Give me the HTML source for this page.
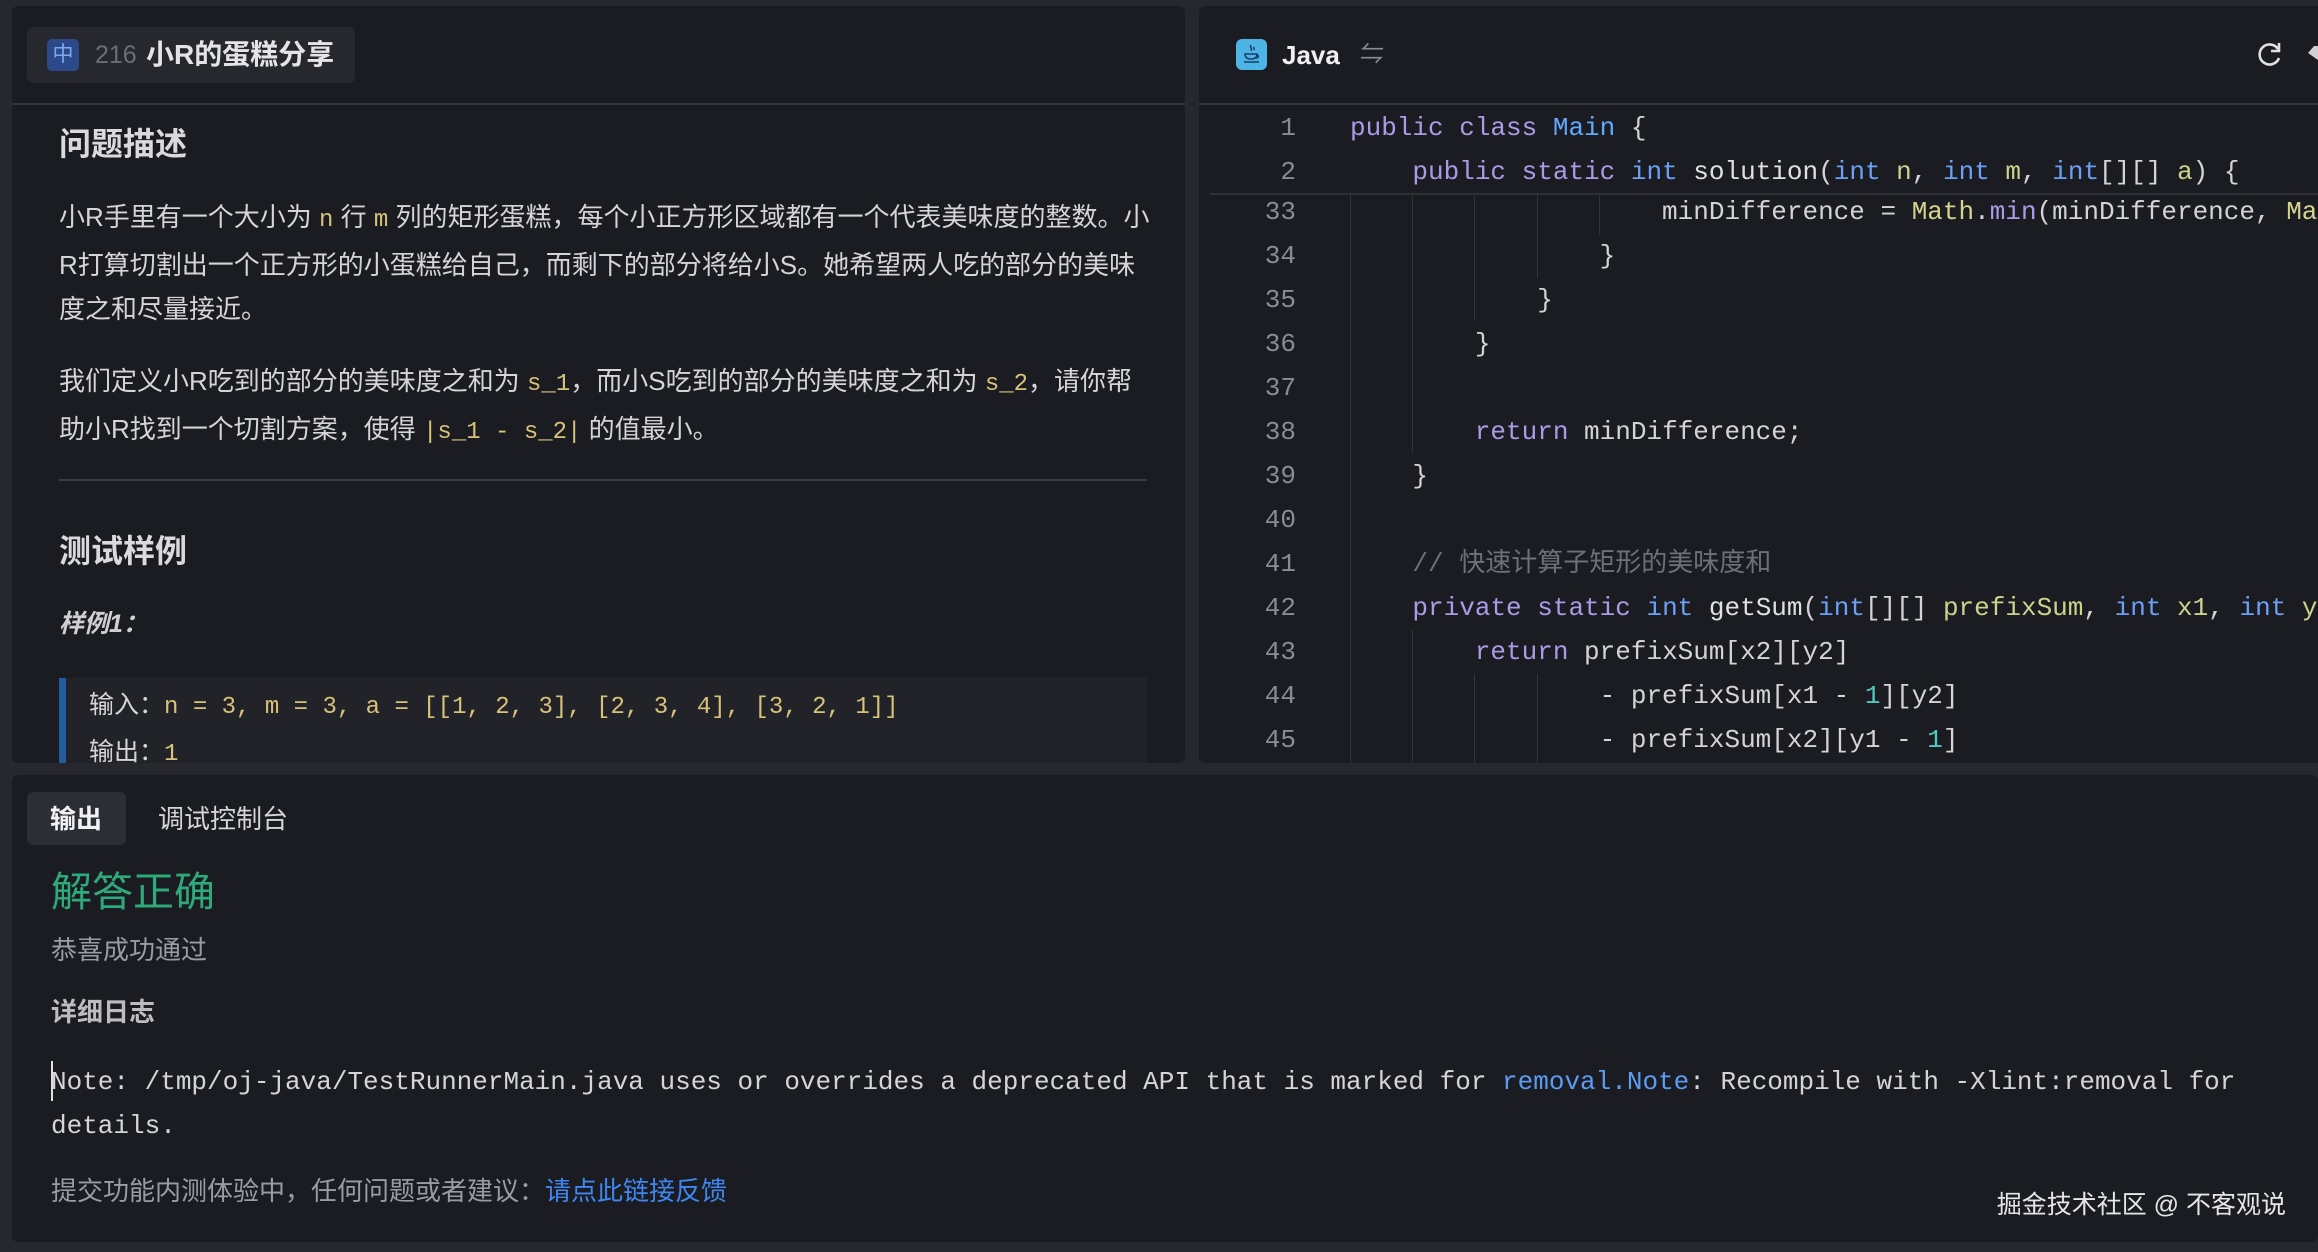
<!DOCTYPE html>
<html><head><meta charset="utf-8">
<style>
*{margin:0;padding:0;box-sizing:border-box}
body{width:2318px;height:1252px;background:#27282d;position:relative;overflow:hidden;font-family:"Liberation Sans","Noto Sans CJK SC",sans-serif;color:#d9d9dc}
.p{position:absolute;background:#1b1c21}
.abs{position:absolute;white-space:pre}
.mono{font-family:"Liberation Mono","Noto Sans CJK SC",monospace}
.y{color:#d8c27a}
.sm{font-size:24px}
.cl{position:absolute;left:0;height:44px;line-height:44px;font-size:26px;white-space:pre;font-family:"Liberation Mono","Noto Sans CJK SC",monospace;color:#d4d4d6}
.ln{position:absolute;width:100px;text-align:right;color:#8a8c92}
.cd{position:absolute;left:1350px}
.k{color:#a99be6}.t{color:#6ba0f4}.m{color:#e0e0e2}.f{color:#d6d58e}.pa{color:#cdd38c}.n{color:#4ec9c0}.c{color:#6d7078}.cls{color:#62a8ff}
.g{position:absolute;width:1px;background:#33353b}
</style></head><body>
<div class="p" style="left:12px;top:6px;width:1173px;height:757px;border-radius:6px"></div>
<div style="position:absolute;left:12px;top:103px;width:1173px;height:2px;background:#34363c"></div>
<div style="position:absolute;left:27px;top:27px;width:328px;height:56px;background:#26282e;border-radius:6px"></div>
<div style="position:absolute;left:47px;top:39px;width:32px;height:32px;background:#2c4a8a;border-radius:5px;color:#7fa9f0;font-size:21px;line-height:32px;text-align:center">中</div>
<div class="abs" style="left:95px;top:38px;font-size:25px;color:#6c6e74;line-height:34px">216</div>
<div class="abs" style="left:146px;top:37px;font-size:28px;font-weight:bold;color:#e4e4e6;line-height:36px">小R的蛋糕分享</div>

<div class="abs" style="left:59px;top:124px;font-size:32px;font-weight:bold;line-height:40px;color:#dadadc">问题描述</div>
<div class="abs" style="left:59px;top:195px;font-size:26px;line-height:44px;color:#d5d5d8">小R手里有一个大小为 <span class="y mono sm">n</span> 行 <span class="y mono sm">m</span> 列的矩形蛋糕，每个小正方形区域都有一个代表美味度的整数。小
R打算切割出一个正方形的小蛋糕给自己，而剩下的部分将给小S。她希望两人吃的部分的美味
度之和尽量接近。</div>
<div class="abs" style="left:59px;top:359px;font-size:26px;line-height:44px;color:#d5d5d8">我们定义小R吃到的部分的美味度之和为 <span class="y mono sm">s_1</span>，而小S吃到的部分的美味度之和为 <span class="y mono sm">s_2</span>，请你帮
助小R找到一个切割方案，使得 <span class="y mono sm">|s_1 - s_2|</span> 的值最小。</div>
<div style="position:absolute;left:59px;top:479px;width:1088px;height:2px;background:#3b3d43"></div>
<div class="abs" style="left:59px;top:531px;font-size:32px;font-weight:bold;line-height:40px;color:#dadadc">测试样例</div>
<div class="abs" style="left:59px;top:608px;font-size:25px;font-weight:bold;font-style:italic;line-height:32px;color:#cfcfd2">样例1：</div>
<div style="position:absolute;left:59px;top:678px;width:1088px;height:85px;background:#222328;border-left:7px solid #1f5d9c"></div>
<div class="abs" style="left:89px;top:683px;font-size:25px;line-height:44px;color:#d5d5d8">输入：<span class="y mono sm">n = 3, m = 3, a = [[1, 2, 3], [2, 3, 4], [3, 2, 1]]</span>
输出：<span class="y mono sm">1</span></div>

<div class="p" style="left:1199px;top:6px;width:1125px;height:757px;border-radius:6px;overflow:hidden"></div>
<div style="position:absolute;left:1199px;top:103px;width:1119px;height:2px;background:#34363c"></div>
<div style="position:absolute;left:1236px;top:39px;width:31px;height:31px;background:#4db4e6;border-radius:6px"></div>
<svg style="position:absolute;left:1236px;top:39px" width="31" height="31" viewBox="0 0 31 31"><g fill="none" stroke="#1a3d66" stroke-width="1.5"><path d="M15 6c-2 2 2 3 0 6M18 8c-1 1 1 2 0 3"/><path d="M9 15h12c0 4-3 5-6 5s-6-1-6-5zM21 16c2 0 2 3-1 3M8 23h15"/></g></svg>
<div class="abs" style="left:1282px;top:38px;font-size:26px;font-weight:bold;color:#f0f0f2;line-height:34px">Java</div>
<div class="abs" style="left:1360px;top:38px;font-size:24px;color:#8a8c92;line-height:34px">⇋</div>
<svg style="position:absolute;left:2256px;top:40px" width="28" height="28" viewBox="0 0 28 28"><path d="M22 9A10 10 0 1 0 23 18" fill="none" stroke="#e0e0e2" stroke-width="2.6"/><path d="M23 3v8h-8" fill="none" stroke="#e0e0e2" stroke-width="2.6"/></svg>
<div style="position:absolute;left:2308px;top:46px;width:10px;height:14px;background:#d0d0d2;clip-path:polygon(60% 0,100% 0,100% 100%,0 50%)"></div>
<div style="position:absolute;left:1210px;top:193px;width:1108px;height:2px;background:#2e3035"></div>

<div class="g" style="left:1350px;top:195px;height:568px"></div>
<div class="g" style="left:1412px;top:195px;height:258px"></div>
<div class="g" style="left:1412px;top:630px;height:133px"></div>
<div class="g" style="left:1474px;top:195px;height:126px"></div>
<div class="g" style="left:1474px;top:674px;height:89px"></div>
<div class="g" style="left:1537px;top:195px;height:83px"></div>
<div class="g" style="left:1537px;top:674px;height:89px"></div>
<div class="g" style="left:1599px;top:195px;height:40px"></div>

<div class="cl" style="top:106px"><span class="ln" style="left:1196px">1</span><span class="cd"><span class="k">public class</span> <span class="cls">Main</span> {</span></div>
<div class="cl" style="top:150px"><span class="ln" style="left:1196px">2</span><span class="cd">    <span class="k">public static</span> <span class="t">int</span> <span class="m">solution</span>(<span class="t">int</span> <span class="pa">n</span>, <span class="t">int</span> <span class="pa">m</span>, <span class="t">int</span>[][] <span class="pa">a</span>) {</span></div>
<div class="cl" style="top:190px"><span class="ln" style="left:1196px">33</span><span class="cd">                    minDifference = <span class="f">Math</span>.<span class="k">min</span>(minDifference, <span class="f">Math</span></span></div>
<div class="cl" style="top:234px"><span class="ln" style="left:1196px">34</span><span class="cd">                }</span></div>
<div class="cl" style="top:278px"><span class="ln" style="left:1196px">35</span><span class="cd">            }</span></div>
<div class="cl" style="top:322px"><span class="ln" style="left:1196px">36</span><span class="cd">        }</span></div>
<div class="cl" style="top:366px"><span class="ln" style="left:1196px">37</span></div>
<div class="cl" style="top:410px"><span class="ln" style="left:1196px">38</span><span class="cd">        <span class="k">return</span> minDifference;</span></div>
<div class="cl" style="top:454px"><span class="ln" style="left:1196px">39</span><span class="cd">    }</span></div>
<div class="cl" style="top:498px"><span class="ln" style="left:1196px">40</span></div>
<div class="cl" style="top:542px"><span class="ln" style="left:1196px">41</span><span class="cd c">    // 快速计算子矩形的美味度和</span></div>
<div class="cl" style="top:586px"><span class="ln" style="left:1196px">42</span><span class="cd">    <span class="k">private static</span> <span class="t">int</span> <span class="m">getSum</span>(<span class="t">int</span>[][] <span class="pa">prefixSum</span>, <span class="t">int</span> <span class="pa">x1</span>, <span class="t">int</span> <span class="pa">y1</span></span></div>
<div class="cl" style="top:630px"><span class="ln" style="left:1196px">43</span><span class="cd">        <span class="k">return</span> prefixSum[x2][y2]</span></div>
<div class="cl" style="top:674px"><span class="ln" style="left:1196px">44</span><span class="cd">                - prefixSum[x1 - <span class="n">1</span>][y2]</span></div>
<div class="cl" style="top:718px"><span class="ln" style="left:1196px">45</span><span class="cd">                - prefixSum[x2][y1 - <span class="n">1</span>]</span></div>
<div style="position:absolute;left:1199px;top:763px;width:1119px;height:12px;background:#27282d"></div>

<div class="p" style="left:12px;top:775px;width:2306px;height:467px;border-radius:6px"></div>
<div style="position:absolute;left:27px;top:792px;width:99px;height:53px;background:#2c2e35;border-radius:6px"></div>
<div class="abs" style="left:50px;top:803px;font-size:26px;font-weight:bold;color:#f2f2f4;line-height:32px">输出</div>
<div class="abs" style="left:158px;top:803px;font-size:26px;color:#d5d5d8;line-height:32px">调试控制台</div>
<div class="abs" style="left:51px;top:869px;font-size:41px;color:#2fa87a;line-height:46px">解答正确</div>
<div class="abs" style="left:51px;top:934px;font-size:26px;color:#9a9ca2;line-height:32px">恭喜成功通过</div>
<div class="abs" style="left:51px;top:996px;font-size:26px;font-weight:bold;color:#bdbdc0;line-height:32px">详细日志</div>
<div style="position:absolute;left:51px;top:1061px;width:2px;height:40px;background:#e0e0e0"></div>
<div class="abs mono" style="left:51px;top:1060px;font-size:26px;line-height:44px;color:#d5d5d8">Note: /tmp/oj-java/TestRunnerMain.java uses or overrides a deprecated API that is marked for <span style="color:#5b9cf2">removal.Note</span>: Recompile with -Xlint:removal for
details.</div>
<div class="abs" style="left:51px;top:1175px;font-size:26px;color:#9a9ca2;line-height:32px">提交功能内测体验中，任何问题或者建议：<span style="color:#3e86f0">请点此链接反馈</span></div>
<div class="abs" style="right:32px;top:1189px;font-size:25px;color:#e6e6e8;line-height:32px">掘金技术社区 @ 不客观说</div>
</body></html>
